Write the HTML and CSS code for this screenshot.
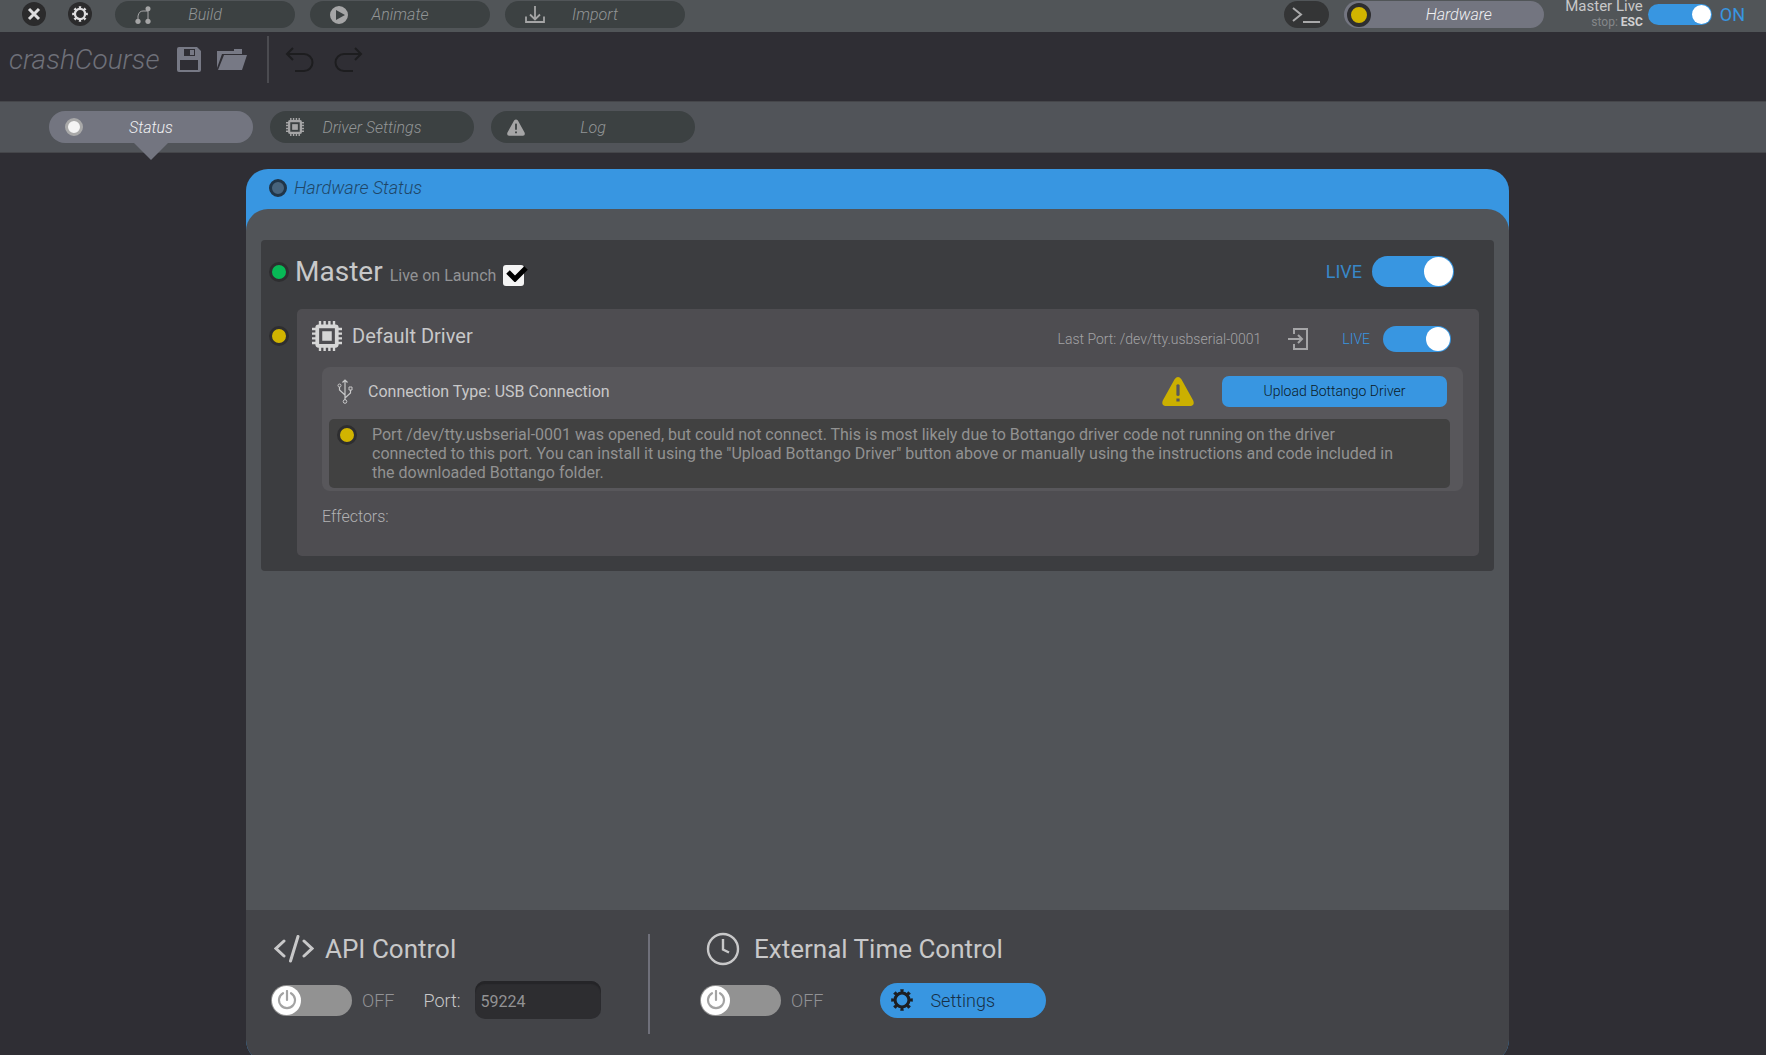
FILE: index.html
```html
<!doctype html>
<html lang="en">
<head>

  <meta charset="utf-8">
  <meta name="viewport" content="width=device-width, initial-scale=1">

  <title>crashCourse - Hardware</title>

  <link rel="stylesheet" href="styles.css">

</head>
<body>

  <!-- shared icons -->
  <svg class="defs" aria-hidden="true">
    <symbol id="gear" viewBox="0 0 24 24">
      <circle cx="12" cy="12" r="7.6" fill="none" stroke="currentColor" stroke-width="3.4"/>
      <circle cx="12" cy="12" r="10" fill="none" stroke="currentColor" stroke-width="3.6" pathLength="80" stroke-dasharray="4.4 5.6" stroke-dashoffset="2.2"/>
    </symbol>
    <symbol id="chip" viewBox="0 0 24 24">
      <path d="M6.4 0v4M10.1 0v4M13.9 0v4M17.6 0v4M6.4 20v4M10.1 20v4M13.9 20v4M17.6 20v4M0 6.4h4M0 10.1h4M0 13.9h4M0 17.6h4M20 6.4h4M20 10.1h4M20 13.9h4M20 17.6h4" stroke="currentColor" stroke-width="1.9"/>
      <rect x="4.2" y="4.2" width="15.6" height="15.6" rx="1" fill="none" stroke="currentColor" stroke-width="3"/>
      <rect x="8.2" y="8.2" width="7.6" height="7.6" fill="currentColor"/>
    </symbol>
    <symbol id="warn" viewBox="0 0 32 29">
      <path fill="currentColor" fill-rule="evenodd" d="M12.6 2.2Q16-2 19.4 2.2L31.2 23.6Q33 28.6 28.4 29H3.6Q-1 28.6.8 23.6ZM14.4 8v10.2q1.6 1.6 3.2 0V8q-1.6-1.4-3.2 0ZM14.4 21.5v3h3.2v-3Z"/>
    </symbol>
    <symbol id="power" viewBox="0 0 20 20">
      <path d="M6 3.2a8 8 0 1 0 8 0M10 1v9" fill="none" stroke="currentColor" stroke-width="2.2" stroke-linecap="round"/>
    </symbol>
  </svg>

  <header class="topbar">
    <button class="round" aria-label="Close">
      <svg width="14" height="14" viewBox="0 0 14 14"><path d="M2 2l10 10M12 2L2 12" stroke="currentColor" stroke-width="3"/></svg>
    </button>
    <button class="round" aria-label="Preferences">
      <svg width="16" height="16"><use href="#gear"/></svg>
    </button>
    <nav class="modes">
      <button class="pill">
        <svg class="pill-icon" width="16" height="18" viewBox="0 0 16 18">
          <path d="M3 15V10Q4 5 8 5h5v10" fill="none" stroke="currentColor"/>
          <circle cx="13" cy="2.7" r="2.5" fill="currentColor"/><circle cx="3" cy="15.3" r="2.6" fill="currentColor"/><circle cx="13" cy="15.3" r="2.6" fill="currentColor"/>
        </svg>
        Build
      </button>
      <button class="pill">
        <svg class="pill-icon" width="18" height="18" viewBox="0 0 18 18"><path fill="currentColor" fill-rule="evenodd" d="M9 0a9 9 0 1 0 0 18A9 9 0 1 0 9 0ZM6 4v10l9-5Z"/></svg>
        Animate
      </button>
      <button class="pill">
        <svg class="pill-icon" width="20" height="18" viewBox="0 0 20 18"><path d="M10 0v14M5 8.500l5 5 5-5M1 10.500V16h18v-5.500" fill="none" stroke="currentColor" stroke-width="1.800"/></svg>
        Import
      </button>
    </nav>

    <div class="top-right">
      <button class="terminal" aria-label="Console">
        <svg width="28" height="18" viewBox="0 0 28 18"><path d="M1 2l8 6.500L1 15M11 16h17" fill="none" stroke="currentColor" stroke-width="2"/></svg>
      </button>
      <button class="pill pill-hardware active"><span class="led led-large yellow"></span>Hardware</button>
      <label class="master-live" for="master-live">
        <span>Master Live</span>
        <small>stop: <b>ESC</b></small>
      </label>
      <span class="toggle toggle-small"><input type="checkbox" role="switch" id="master-live" checked></span>
      <span class="on">ON</span>
    </div>
  </header>

  <div class="project">
    <h1>crashCourse</h1>
    <button class="tool" aria-label="Save">
      <svg width="24" height="25" viewBox="0 0 24 25"><path fill="currentColor" fill-rule="evenodd" d="M2 0H20l4 4V23q0 2-2 2H2q-2 0-2-2V2q0-2 2-2ZM7 2v7h11V2ZM3 13v10h18V13Z"/><path fill="currentColor" d="M13 3h4v5h-4z"/></svg>
    </button>
    <button class="tool" aria-label="Open">
      <svg width="30" height="22" viewBox="0 0 30 22"><path fill="currentColor" d="M0 2h17V0h8v5H5L0 19ZM7 6h23l-5 15H1Z"/></svg>
    </button>
    <div class="rule"></div>
    <button class="tool dim" aria-label="Undo">
      <svg width="29" height="26" viewBox="0 0 29 26"><path d="M8 1L2 7l6 6M2 7h17a8.500 8.500 0 0 1 0 17H10" fill="none" stroke="currentColor" stroke-width="2"/></svg>
    </button>
    <button class="tool dim" aria-label="Redo">
      <svg width="29" height="26" viewBox="0 0 29 26"><path d="M21 1l6 6-6 6M27 7H10a8.500 8.500 0 0 0 0 17h9" fill="none" stroke="currentColor" stroke-width="2"/></svg>
    </button>
  </div>

  <nav class="subnav">
    <button class="pill active"><span class="status-dot"></span>Status</button>
    <button class="pill"><svg class="pill-icon" width="18" height="18"><use href="#chip"/></svg>Driver Settings</button>
    <button class="pill"><svg class="pill-icon" width="18" height="17"><use href="#warn"/></svg>Log</button>
  </nav>

  <main>
    <section class="panel">
      <h2 class="panel-title"><span class="title-dot"></span>Hardware Status</h2>

      <div class="panel-body">
        <div class="master">
          <div class="master-row">
            <span class="led green"></span>
            <div class="master-name">
              <h3>Master</h3>
              <label for="on-launch">Live on Launch</label>
            </div>
            <span class="check">
              <input type="checkbox" id="on-launch" checked>
              <svg width="22" height="17" viewBox="0 0 22 17"><path d="M2 7l7 7L20 3" fill="none" stroke="#000" stroke-width="5"/></svg>
            </span>
            <label class="live push" for="master-toggle">LIVE</label>
            <span class="toggle"><input type="checkbox" role="switch" id="master-toggle" checked></span>
          </div>

          <div class="driver-row">
            <div class="driver-led"><span class="led yellow"></span></div>
            <article class="driver">
              <div class="driver-head">
                <svg class="driver-chip" width="30" height="30"><use href="#chip"/></svg>
                <h4>Default Driver</h4>
                <div class="driver-port">
                  <span>Last Port: /dev/tty.usbserial-0001</span>
                  <button class="enter" aria-label="Open port">
                    <svg width="20" height="22" viewBox="0 0 20 22"><path d="M6 6V1h13v20H6v-5" fill="none" stroke="currentColor" stroke-width="2"/><path d="M0 11h14M10 7l4 4-4 4" fill="none" stroke="currentColor" stroke-width="2"/></svg>
                  </button>
                  <label class="live" for="driver-toggle">LIVE</label>
                  <span class="toggle toggle-medium"><input type="checkbox" role="switch" id="driver-toggle" checked></span>
                </div>
              </div>

              <div class="connection">
                <div class="connection-head">
                  <svg class="usb" width="16" height="25" viewBox="0 0 16 25">
                    <path d="M8 1v20M5.500 3.500L8 1l2.500 2.500M2.500 8v3L8 16M13.500 11v3L8 19" fill="none" stroke="currentColor" stroke-width="1.200"/>
                    <circle cx="2.500" cy="6.500" r="1.500" fill="none" stroke="currentColor"/><path d="M12 8h3v3h-3z" fill="none" stroke="currentColor"/><circle cx="8" cy="22.500" r="1.800" fill="none" stroke="currentColor"/>
                  </svg>
                  <span>Connection Type: USB Connection</span>
                  <svg class="alert" width="32" height="29"><use href="#warn"/></svg>
                  <button class="upload">Upload Bottango Driver</button>
                </div>
                <div class="message">
                  <span class="led yellow"></span>
                  <p>Port /dev/tty.usbserial-0001 was opened, but could not connect. This is most likely due to Bottango driver code not running on the driver connected to this port. You can install it using the "Upload Bottango Driver" button above or manually using the instructions and code included in the downloaded Bottango folder.</p>
                </div>
              </div>

              <p class="effectors">Effectors:</p>
            </article>
          </div>
        </div>
      </div>

      <footer class="panel-footer">
        <div class="control control-api">
          <h3>
            <svg width="40" height="28" viewBox="0 0 40 28"><path d="M10 6L2 13.500 10 21M30 6l8 7.500L30 21M24 1.500L16.500 26" fill="none" stroke="currentColor" stroke-width="3" stroke-linecap="round"/></svg>
            API Control
          </h3>
          <div class="control-row">
            <span class="toggle"><input type="checkbox" role="switch" id="api-toggle"><svg width="20" height="20"><use href="#power"/></svg></span>
            <label class="off" for="api-toggle">OFF</label>
            <label class="port-label" for="port">Port:</label>
            <input class="port" type="text" id="port" value="59224">
          </div>
        </div>
        <div class="control control-time">
          <h3>
            <svg width="34" height="34" viewBox="0 0 34 34"><circle cx="17" cy="17" r="15" fill="none" stroke="currentColor" stroke-width="2.400"/><path d="M17 7v10.500l6 3" fill="none" stroke="currentColor" stroke-width="2.400"/></svg>
            External Time Control
          </h3>
          <div class="control-row">
            <span class="toggle"><input type="checkbox" role="switch" id="time-toggle"><svg width="20" height="20"><use href="#power"/></svg></span>
            <label class="off" for="time-toggle">OFF</label>
            <button class="settings"><svg width="22" height="22"><use href="#gear"/></svg>Settings</button>
          </div>
        </div>
      </footer>
    </section>
  </main>

</body>
</html>
```

FILE: styles.css
```css
* {
  box-sizing: border-box;
}

html, body {
  height: 100%;
}

body {
  display: flex;
  flex-direction: column;
  margin: 0;
  overflow: hidden;
  background-color: #2f2e34;
  color: #c8c8c9;
  font-family: Roboto, "Liberation Sans", sans-serif;
  font-size: 16px;
}

h1, h2, h3, h4, p {
  margin: 0;
  font-weight: 400;
}

svg {
  display: block;
  flex: none;
}

button {
  padding: 0;
  border: none;
  background: none;
  color: inherit;
  font: inherit;
  cursor: pointer;
}

.defs {
  position: absolute;
  width: 0;
  height: 0;
}

/* top bar */

.topbar {
  display: flex;
  align-items: flex-start;
  flex: none;
  height: 32px;
  padding: 1px 21px 0 22px;
  background-color: #515558;
}

.round {
  display: flex;
  align-items: center;
  justify-content: center;
  width: 24px;
  height: 24px;
  margin: 1px 22px 0 0;
  border-radius: 50%;
  background-color: #2b2b2c;
  color: #dededf;
}

.modes {
  display: flex;
  gap: 15px;
  margin-left: 1px;
}

.pill {
  position: relative;
  width: 180px;
  height: 27px;
  border-radius: 16px;
  background-color: #3c4142;
  color: #929596;
  font-weight: 300;
  font-style: italic;
}

.pill.active {
  background-color: #737580;
  color: #f0f0f2;
}

.pill-icon {
  position: absolute;
  top: 0;
  bottom: 0;
  left: 20px;
  margin: auto 0;
  color: #a5a5a6;
}

.top-right {
  display: flex;
  align-items: flex-start;
  margin-left: auto;
}

.terminal {
  display: flex;
  align-items: center;
  justify-content: center;
  width: 45px;
  height: 27px;
  margin-right: 15px;
  border-radius: 14px;
  background-color: #343536;
  color: #a9a9aa;
}

.pill-hardware {
  width: 200px;
  padding-left: 30px;
}

.master-live {
  display: flex;
  flex-direction: column;
  width: 99px;
  margin-top: -3px;
  font-size: 15px;
  line-height: 16px;
  text-align: right;
}

.master-live small {
  color: #85878a;
  font-size: 12px;
}

.master-live b {
  color: #d0d0d1;
}

.top-right .toggle {
  margin: 3px 8px 0 5px;
}

.on {
  color: #3896e1;
  font-size: 18px;
  line-height: 27px;
}

/* leds */

.led {
  flex: none;
  width: 20px;
  height: 20px;
  border: 3px solid #2e2e30;
  border-radius: 50%;
}

.led.yellow {
  background-color: #d1b400;
}

.led.green {
  background-color: #08b956;
}

.led-large {
  position: absolute;
  top: 2px;
  left: 3px;
  width: 24px;
  height: 24px;
  border-width: 4px;
}

/* switches */

.toggle {
  position: relative;
  flex: none;
  width: 82px;
  height: 31px;
}

.toggle-medium {
  width: 68px;
  height: 26px;
}

.toggle-small {
  width: 64px;
  height: 21px;
}

.toggle input {
  display: flex;
  width: 100%;
  height: 100%;
  margin: 0;
  padding: 1px;
  appearance: none;
  border-radius: 16px;
  background-color: #929292;
  cursor: pointer;
}

.toggle input::before {
  content: "";
  height: 100%;
  aspect-ratio: 1;
  border-radius: 50%;
  background-color: #fff;
}

.toggle input:checked {
  justify-content: flex-end;
  background-color: #3896e1;
}

.toggle svg {
  position: absolute;
  top: 5px;
  left: 6px;
  color: #a3a3a3;
  pointer-events: none;
}

/* project bar */

.project {
  display: flex;
  align-items: flex-start;
  flex: none;
  height: 69px;
  padding: 4px 9px;
}

.project h1 {
  margin-right: 17px;
  color: #6e7079;
  font-size: 28px;
  font-style: italic;
  font-weight: 300;
  line-height: 47px;
}

.tool {
  display: flex;
  align-items: center;
  height: 47px;
  margin-right: 16px;
  color: #777985;
}

.rule {
  width: 2px;
  height: 47px;
  margin: 0 16px 0 4px;
  background-color: #4b4b50;
}

.tool.dim {
  margin-right: 20px;
  color: #1d1d1f;
}

/* sub navigation */

.subnav {
  display: flex;
  gap: 17px;
  flex: none;
  height: 52px;
  padding: 9px 49px;
  border-top: 1px solid #45464a;
  border-bottom: 1px solid #45464a;
  background-color: #515459;
}

.subnav .pill {
  width: 204px;
  height: 32px;
}

.subnav .pill-icon {
  left: 16px;
}

.subnav .active::after {
  content: "";
  position: absolute;
  top: 32px;
  left: 50%;
  margin-left: -17px;
  border: 17px solid transparent;
  border-top-color: #737580;
  border-bottom: none;
}

.status-dot {
  position: absolute;
  top: 7px;
  left: 16px;
  width: 18px;
  height: 18px;
  border: 3px solid #a9a9a9;
  border-radius: 50%;
  background-color: #f4f4f4;
}

/* panel */

main {
  display: flex;
  flex: 1;
  min-height: 0;
  padding: 16px 257px 0 246px;
}

.panel {
  display: flex;
  flex-direction: column;
  flex: 1;
  margin-bottom: -7px;
  overflow: hidden;
  border-radius: 22px;
  background-color: #3896e1;
}

.panel-title {
  display: flex;
  align-items: center;
  gap: 7px;
  height: 40px;
  padding: 0 23px 3px;
  color: #1f4668;
  font-size: 18px;
  font-style: italic;
  font-weight: 300;
}

.title-dot {
  width: 18px;
  height: 18px;
  border: 3px solid #203548;
  border-radius: 50%;
  background-color: #47637c;
}

.panel-body {
  flex: 1;
  padding: 31px 15px;
  border-radius: 22px 22px 0 0;
  background-color: #515458;
}

.master {
  padding: 0 15px 15px 8px;
  border-radius: 4px;
  background-color: #3c3d40;
}

.master-row {
  display: flex;
  align-items: center;
  height: 69px;
  padding: 0 25px 6px 0;
}

.master-name {
  display: flex;
  align-items: baseline;
  gap: 7px;
  margin-left: 6px;
}

.master-name h3 {
  font-size: 28px;
}

.master-name label {
  color: #929395;
}

.check {
  position: relative;
  width: 21px;
  height: 21px;
  margin: 7px 0 0 7px;
}

.check input {
  display: block;
  width: 21px;
  height: 21px;
  margin: 0;
  appearance: none;
  border-radius: 3px;
  background-color: #f4f4f4;
}

.check svg {
  position: absolute;
  top: 0;
  left: 3px;
  visibility: hidden;
  pointer-events: none;
}

.check input:checked + svg {
  visibility: visible;
}

.live {
  color: #3887c7;
  font-size: 18px;
}

.push {
  margin: 0 10px 0 auto;
}

/* driver */

.driver-row {
  display: flex;
  gap: 8px;
}

.driver-led {
  display: flex;
  align-items: center;
  height: 54px;
}

.driver {
  flex: 1;
  padding: 0 16px 29px 25px;
  border-radius: 5px;
  background-color: #4e4d51;
}

.driver-head {
  display: flex;
  align-items: center;
  height: 58px;
  padding: 0 12px 4px 0;
}

.driver-chip {
  margin: 0 10px 0 -10px;
  color: #d6d6d6;
}

.driver-head h4 {
  font-size: 20px;
}

.driver-port {
  display: flex;
  align-items: center;
  margin-left: auto;
  padding-top: 6px;
  color: #a3a3a5;
  font-size: 14px;
  font-weight: 300;
}

.enter {
  margin: 0 34px 0 27px;
  color: #a5a5a7;
}

.driver-port .live {
  margin-right: 13px;
  color: #3896e1;
  font-size: 14px;
}

.connection {
  padding: 0 13px 3px 7px;
  border-radius: 8px;
  background-color: #58575b;
}

.connection-head {
  display: flex;
  align-items: center;
  height: 52px;
  padding: 0 3px 4px 8px;
}

.usb {
  margin-right: 15px;
}

.alert {
  margin: 0 28px 0 auto;
  color: #cbb000;
}

.upload {
  width: 225px;
  height: 31px;
  border-radius: 7px;
  background-color: #3896e1;
  color: #0b1a27;
  font-size: 14px;
  font-weight: 300;
}

.message {
  display: flex;
  gap: 15px;
  padding: 6px 48px 6px 8px;
  border-radius: 5px;
  background-color: #414141;
  color: #929292;
  line-height: 19px;
}

.effectors {
  margin-top: 16px;
  color: #b2b2b4;
  font-weight: 300;
  line-height: 20px;
}

/* footer */

.panel-footer {
  display: flex;
  height: 152px;
  padding-top: 24px;
  background-color: #434448;
}

.control {
  height: 100px;
}

.control-api {
  width: 404px;
  padding-left: 25px;
  border-right: 2px solid #6f707a;
}

.control-time {
  padding-left: 50px;
}

.control h3 {
  display: flex;
  align-items: center;
  height: 30px;
  font-size: 26px;
}

.control-api h3 svg {
  margin: 0 11px 0 3px;
}

.control-time h3 svg {
  margin: 0 14px 0 6px;
}

.control-row {
  display: flex;
  align-items: center;
  height: 36px;
  margin-top: 18px;
}

.control-row .toggle {
  width: 81px;
}

.off {
  margin-left: 10px;
  color: #929295;
  font-size: 18px;
  font-weight: 300;
}

.port-label {
  margin-left: 29px;
  font-size: 18px;
  font-weight: 300;
}

.port {
  width: 126px;
  height: 38px;
  margin-left: 14px;
  padding: 3px 6px 0;
  border: none;
  border-radius: 10px;
  outline: none;
  background-color: #2d2d30;
  box-shadow: inset 0 3px 1px #252528;
  color: #929294;
  font: inherit;
}

.settings {
  display: flex;
  align-items: center;
  gap: 17px;
  width: 166px;
  height: 35px;
  margin-left: 57px;
  padding-left: 11px;
  border-radius: 18px;
  background-color: #3896e1;
  color: #173047;
  font-size: 18px;
  font-weight: 300;
}

.settings svg {
  color: #1d1f22;
}
```
